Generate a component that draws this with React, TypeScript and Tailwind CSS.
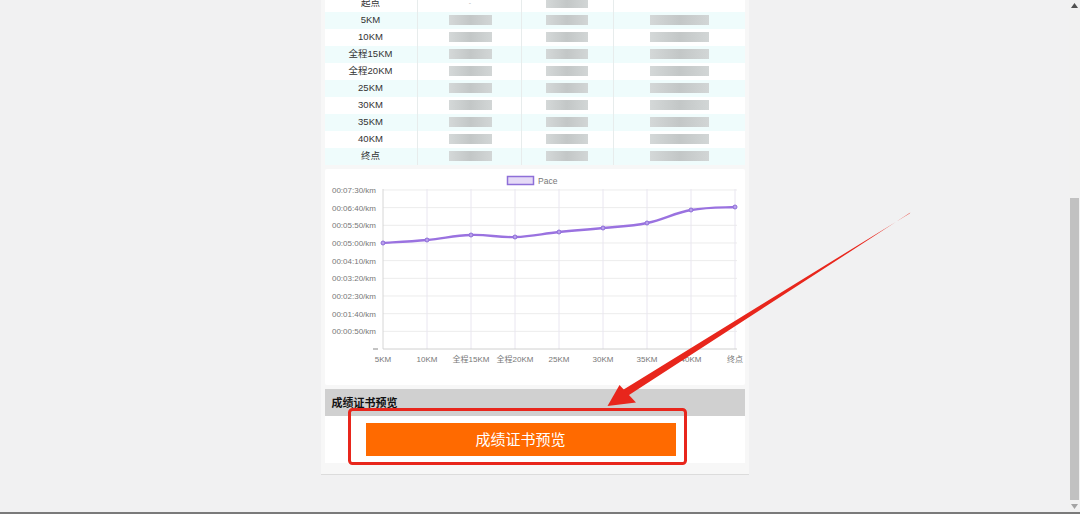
import React from 'react';

const rows = [
    { name: '起点', start: true },
    { name: '5KM' },
    { name: '10KM' },
    { name: '全程15KM' },
    { name: '全程20KM' },
    { name: '25KM' },
    { name: '30KM' },
    { name: '35KM' },
    { name: '40KM' },
    { name: '终点' },
];

const xLabels = ['5KM', '10KM', '全程15KM', '全程20KM', '25KM', '30KM', '35KM', '40KM', '终点'];
const yLabels = [
    '00:00:50/km',
    '00:01:40/km',
    '00:02:30/km',
    '00:03:20/km',
    '00:04:10/km',
    '00:05:00/km',
    '00:05:50/km',
    '00:06:40/km',
    '00:07:30/km',
];
// pace in px from chart top
const points = [74, 71, 66, 68, 63, 59, 54, 41, 38];

const AXIS_X = 58;
const STEP_X = 44;
const AXIS_Y = 180;
const STEP_Y = 17.67;

function smoothPath(pts: [number, number][]) {
    let d = `M ${pts[0][0]} ${pts[0][1]}`;
    for (let i = 0; i < pts.length - 1; i++) {
        const p0 = pts[i - 1] || pts[i];
        const p1 = pts[i];
        const p2 = pts[i + 1];
        const p3 = pts[i + 2] || p2;
        const t = 0.4 / 2;
        const c1x = p1[0] + (p2[0] - p0[0]) * t;
        const c1y = p1[1] + (p2[1] - p0[1]) * t;
        const c2x = p2[0] - (p3[0] - p1[0]) * t;
        const c2y = p2[1] - (p3[1] - p1[1]) * t;
        d += ` C ${c1x} ${c1y}, ${c2x} ${c2y}, ${p2[0]} ${p2[1]}`;
    }
    return d;
}

function Blur({ w }: { w: string }) {
    return (
        <div className={`${w} h-[10px] blur-[0.7px] bg-gradient-to-r from-[#d4d8d8] via-[#c3c7c7] to-[#d2d6d6]`} />
    );
}

function PaceChart() {
    const pts: [number, number][] = points.map((y, i) => [AXIS_X + i * STEP_X, y]);
    return (
        <svg width="420" height="217" viewBox="0 0 420 217" style={{ fontFamily: '"Liberation Sans", "Noto Sans CJK SC", sans-serif' }}>
            {/* legend */}
            <rect x="182.5" y="7.5" width="26" height="8" fill="#e5daf6" stroke="#8e6fd8" strokeWidth="1.5" />
            <text x="213" y="14.5" fontSize="8.5" fill="#777">Pace</text>

            {/* horizontal grid */}
            {yLabels.map((label, k) => {
                const y = AXIS_Y - (k + 1) * STEP_Y;
                return (
                    <g key={label}>
                        <line x1={AXIS_X} x2="412" y1={y} y2={y} stroke="#ececec" strokeWidth="1" />
                        <text x="51" y={y + 3} fontSize="8" fill="#777" textAnchor="end">{label}</text>
                    </g>
                );
            })}
            <line x1="48" x2="53" y1={AXIS_Y} y2={AXIS_Y} stroke="#888" strokeWidth="1" />

            {/* vertical grid */}
            {xLabels.map((label, i) => {
                const x = AXIS_X + i * STEP_X;
                return (
                    <g key={label}>
                        <line x1={x} x2={x} y1="20" y2={AXIS_Y} stroke={i === 0 ? '#d6d6d6' : '#e9e6f0'} strokeWidth="1" />
                        <text x={x} y="193" fontSize="8" fill="#777" textAnchor="middle">{label}</text>
                    </g>
                );
            })}
            <line x1={AXIS_X} x2="412" y1={AXIS_Y} y2={AXIS_Y} stroke="#d0d0d0" strokeWidth="1" />

            {/* line */}
            <path d={smoothPath(pts)} fill="none" stroke="#9a72e0" strokeWidth="2.3" />
            {pts.map(([x, y], i) => (
                <circle key={i} cx={x} cy={y} r="2" fill="#b9a0ec" stroke="#8e6fd8" strokeWidth="1" />
            ))}
        </svg>
    );
}

export default function App() {
    return (
        <div className="relative w-[1080px] h-[514px] overflow-hidden bg-[#f1f1f2]" style={{ fontFamily: '"Liberation Sans", "Noto Sans CJK SC", sans-serif' }}>
            <div className="flex h-[512px]">
                <div className="flex-1 flex justify-center overflow-hidden">
                    <div className="w-[428px] h-[475px] bg-[#f7f7f7] px-[4px] border-b border-[#dcdcdc]">
                        {/* split table */}
                        <div className="-mt-[5.5px] bg-white">
                            {rows.map((row, i) => (
                                <div
                                    key={row.name}
                                    className={`grid grid-cols-[93px_104px_92px_131px] h-[17px] text-[9.5px] text-[#333] ${i % 2 === 1 ? 'bg-[#effcfc]' : 'bg-white'}`}
                                    style={{ fontFamily: '"Liberation Sans", "Noto Sans CJK SC", sans-serif' }}
                                >
                                    <div className="flex items-center justify-center pt-[1px] border-r border-[#e7ecec]">{row.name}</div>
                                    <div className="flex items-center justify-center border-r border-[#e7ecec] pl-[2px]">
                                        {row.start ? <span className="text-[#bbb] text-[7px]">-</span> : <Blur w="w-[43px]" />}
                                    </div>
                                    <div className="flex items-center justify-center border-r border-[#e7ecec]">
                                        <Blur w="w-[42px]" />
                                    </div>
                                    <div className="flex items-center justify-center">
                                        {row.start ? <div className="w-[59px] h-[10px]" /> : <Blur w="w-[59px]" />}
                                    </div>
                                </div>
                            ))}
                        </div>

                        {/* chart */}
                        <div className="mt-[4px] bg-white rounded-[2px] h-[216px] overflow-hidden">
                            <PaceChart />
                        </div>

                        {/* certificate */}
                        <div className="mt-[4px] bg-[#d0d0d0] h-[27px] flex items-center pl-[7px] text-[11px] font-bold text-[#111]" style={{ fontFamily: '"Noto Sans CJK SC", sans-serif' }}>
                            成绩证书预览
                        </div>
                        <div className="bg-white h-[47px] pt-[7px] pl-[41px]">
                            <button
                                className="w-[310px] h-[33px] bg-[#ff6a00] text-white text-[15px] flex items-center justify-center"
                                style={{ fontFamily: '"Noto Sans CJK SC", sans-serif' }}
                            >
                                成绩证书预览
                            </button>
                        </div>
                    </div>
                </div>

                {/* scrollbar */}
                <div className="w-[11px] bg-[#f1f1f1] flex flex-col items-center">
                    <svg width="7" height="5" viewBox="0 0 7 5" className="mt-[3px]">
                        <polygon points="3.5,0 7,5 0,5" fill="#505050" />
                    </svg>
                    <div className="mt-[190px] w-[9px] h-[302px] bg-[#c1c1c1]" />
                    <svg width="7" height="5" viewBox="0 0 7 5" className="mt-[4px]">
                        <polygon points="0,0 7,0 3.5,5" fill="#a3a3a3" />
                    </svg>
                </div>
            </div>
            <div className="h-[2px] bg-[#7a7a7a]" />

            {/* red annotation overlay */}
            <svg className="absolute inset-0 pointer-events-none" width="1080" height="514" viewBox="0 0 1080 514">
                <rect x="349.5" y="409.5" width="336" height="54" rx="3" fill="none" stroke="#e8261c" strokeWidth="3" />
                <polygon points="910.4,212.6 909.6,213.4 620,391.8 624,398.2" fill="#e8261c" />
                <polygon points="607.5,406 619.5,385 636,402.5" fill="#e8261c" />
            </svg>
        </div>
    );
}
